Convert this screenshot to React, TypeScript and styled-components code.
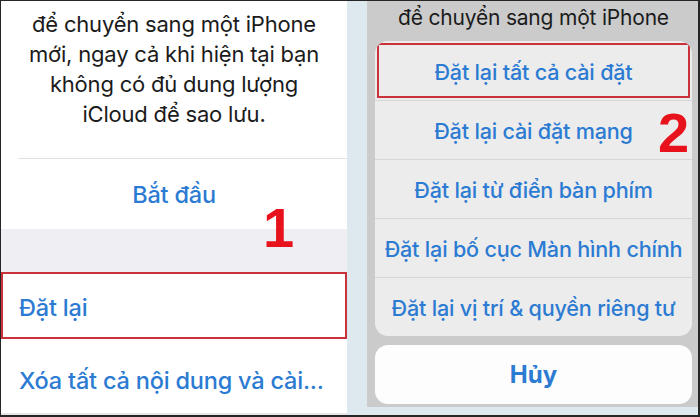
import * as React from "react"
import styled, {createGlobalStyle} from "styled-components"

const GlobalStyle = createGlobalStyle`
  html, body {
    margin: 0;
    padding: 0;
    background: #ffffff;
  }
  body {
    font-family: Inter, "Liberation Sans", Arial, sans-serif;
    -webkit-font-smoothing: antialiased;
  }
`

const Frame = styled.div`
  width: 700px;
  height: 417px;
  box-sizing: border-box;
  border-style: solid;
  border-color: #262626;
  border-width: 1px 2px 2px 1px;
  display: flex;
  overflow: hidden;
`

const LeftPanel = styled.div`
  position: relative;
  width: 346px;
  flex: none;
  display: flex;
  flex-direction: column;
  background: #ffffff;
  border-bottom: 2px solid #e4e6e8;
`

const Strip = styled.div`
  width: 20px;
  flex: none;
  background: #dde9ef;
`

const RightPanel = styled.div`
  position: relative;
  flex: 1;
  display: flex;
  flex-direction: column;
  background: #dde9ef;
`

const Dimmed = styled.div`
  flex: 1;
  display: flex;
  flex-direction: column;
  padding: 0 6px 2px 8px;
  background: #cbcbcb;
  margin-bottom: 8px;
`

const Description = styled.div<{$size: number; $top: number; $height: number}>`
  box-sizing: border-box;
  height: ${p => p.$height}px;
  flex: none;
  padding-top: ${p => p.$top}px;
  text-align: center;
  color: #1b1b1b;
  font-size: ${p => p.$size}px;
  line-height: 30px;
  letter-spacing: -0.2px;
`

const Line = styled.div`
  white-space: nowrap;
`

const Divider = styled.div`
  height: 1px;
  margin-left: 17px;
  background: #e2e2e4;
`

const LinkRow = styled.div<{$height?: number; $align?: "center" | "left"; $top?: number; $flag?: boolean}>`
  box-sizing: border-box;
  display: flex;
  align-items: center;
  justify-content: ${p => (p.$align === "left" ? "flex-start" : "center")};
  height: ${p => (p.$height ? `${p.$height}px` : "auto")};
  flex: ${p => (p.$height ? "none" : "1")};
  padding: ${p => p.$top ?? 0}px 0 0 ${p => (p.$align === "left" ? 18 : 0)}px;
  color: #2c7bd3;
  font-size: 23.5px;
  font-weight: 500;
  letter-spacing: -0.2px;
  white-space: nowrap;
  background: #ffffff;
  ${p => (p.$flag ? "box-shadow: inset 0 0 0 2px #c9323a;" : "")}
`

const GrayBand = styled.div`
  height: 43px;
  flex: none;
  background: #efeff3;
`

const Sheet = styled.div`
  flex: none;
  display: flex;
  flex-direction: column;
  border-radius: 13px;
  overflow: hidden;
  background: #ececec;
`

const SheetItem = styled.div<{$flag?: boolean}>`
  height: 59px;
  box-sizing: border-box;
  display: flex;
  align-items: center;
  justify-content: center;
  padding-top: 2px;
  color: #2c7bd3;
  font-size: 21.6px;
  font-weight: 500;
  letter-spacing: -0.2px;
  white-space: nowrap;
  & + & {
    border-top: 1px solid #d6d6d6;
  }
  ${p => (p.$flag ? "outline: 2px solid #c9323a; outline-offset: -4px;" : "")}
`

const CancelButton = styled.div`
  height: 59px;
  flex: none;
  margin-top: 9px;
  display: flex;
  align-items: center;
  justify-content: center;
  border-radius: 13px;
  background: #fdfdfd;
  color: #2c7bd3;
  font-size: 24px;
  font-weight: 700;
`

const StepNumber = styled.div<{$x: number; $y: number}>`
  position: absolute;
  left: ${p => p.$x}px;
  top: ${p => p.$y}px;
  color: #e8121c;
  font-family: "Liberation Sans", Arial, sans-serif;
  font-size: 56px;
  font-weight: 700;
  line-height: 1;
`

const description = [
  "để chuyển sang một iPhone",
  "mới, ngay cả khi hiện tại bạn",
  "không có đủ dung lượng",
  "iCloud để sao lưu.",
]

const resetOptions = [
  "Đặt lại tất cả cài đặt",
  "Đặt lại cài đặt mạng",
  "Đặt lại từ điển bàn phím",
  "Đặt lại bố cục Màn hình chính",
  "Đặt lại vị trí & quyền riêng tư",
]

const App = () => (
  <>
    <GlobalStyle />
    <Frame>
      <LeftPanel>
        <Description $size={22} $top={8} $height={157}>
          {description.map(line => (
            <Line key={line}>{line}</Line>
          ))}
        </Description>
        <Divider />
        <LinkRow $height={70} $top={0}>Bắt đầu</LinkRow>
        <GrayBand />
        <LinkRow $height={67} $align="left" $top={4} $flag>
          Đặt lại
        </LinkRow>
        <LinkRow $align="left" $top={8}>Xóa tất cả nội dung và cài...</LinkRow>
        <StepNumber $x={262} $y={199}>1</StepNumber>
      </LeftPanel>
      <Strip />
      <RightPanel>
        <Dimmed>
          <Description $size={21} $top={2} $height={40}>
            <Line>{description[0]}</Line>
          </Description>
          <Sheet>
            {resetOptions.map((option, i) => (
              <SheetItem key={option} $flag={i === 0}>
                {option}
              </SheetItem>
            ))}
          </Sheet>
          <CancelButton>Hủy</CancelButton>
        </Dimmed>
        <StepNumber $x={291} $y={104}>2</StepNumber>
      </RightPanel>
    </Frame>
  </>
)

export default App
